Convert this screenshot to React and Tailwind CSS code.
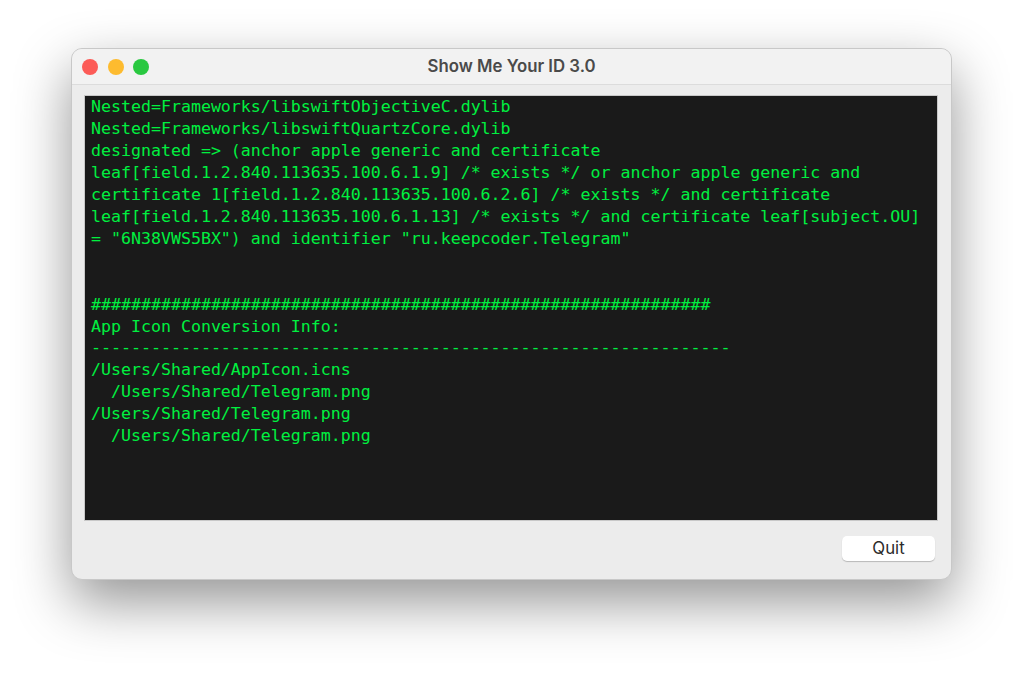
const logLines = [
  "Nested=Frameworks/libswiftObjectiveC.dylib",
  "Nested=Frameworks/libswiftQuartzCore.dylib",
  "designated => (anchor apple generic and certificate",
  "leaf[field.1.2.840.113635.100.6.1.9] /* exists */ or anchor apple generic and",
  "certificate 1[field.1.2.840.113635.100.6.2.6] /* exists */ and certificate",
  "leaf[field.1.2.840.113635.100.6.1.13] /* exists */ and certificate leaf[subject.OU]",
  '= "6N38VWS5BX") and identifier "ru.keepcoder.Telegram"',
  " ",
  " ",
  "#".repeat(62),
  "App Icon Conversion Info:",
  "-".repeat(64),
  "/Users/Shared/AppIcon.icns",
  "  /Users/Shared/Telegram.png",
  "/Users/Shared/Telegram.png",
  "  /Users/Shared/Telegram.png",
];

const App = () => {
  return (
    <div className="h-[674px] w-[1023px] overflow-hidden bg-white pl-[71px] pt-[48px]">
      <div className="flex h-[532px] w-[881px] flex-col overflow-hidden rounded-[11px] border border-[#c8c8c8] bg-[#ececec] shadow-[0_22px_55px_rgba(0,0,0,0.42)]">
        {/* Title bar */}
        <div className="flex h-[36px] shrink-0 items-center border-b border-[#dcdcdc] bg-[#f2f2f2] pl-[10px]">
          <div className="flex gap-[9.6px]">
            <span className="h-[16px] w-[16px] rounded-full bg-[#fc5b57]" />
            <span className="h-[16px] w-[16px] rounded-full bg-[#fdbb2f]" />
            <span className="h-[16px] w-[16px] rounded-full bg-[#29c840]" />
          </div>
          <p className="flex-1 pr-[77px] text-center font-['Inter','Liberation_Sans',sans-serif] text-[16.8px] font-semibold text-[#4a4a4a]">
            Show Me Your ID 3.0
          </p>
        </div>

        {/* Log output */}
        <div className="ml-[12px] mr-[13px] mt-[10px] h-[426px] shrink-0 border border-[#c8c8c8] bg-[#1a1a1a] pl-[6px]">
          <pre className="font-['DejaVu_Sans_Mono','Liberation_Mono',monospace] text-[16.6px] leading-[21.95px] text-[#00f040]">
            {logLines.join("\n")}
          </pre>
        </div>

        {/* Footer */}
        <div className="flex justify-end pr-[16px] pt-[15px]">
          <button className="h-[25px] w-[93px] rounded-[5px] bg-white font-['Inter','Liberation_Sans',sans-serif] text-[16.8px] text-[#2b2b2b] shadow-[0_1px_1px_rgba(0,0,0,0.22)]">
            Quit
          </button>
        </div>
      </div>
    </div>
  );
};

export default App;
